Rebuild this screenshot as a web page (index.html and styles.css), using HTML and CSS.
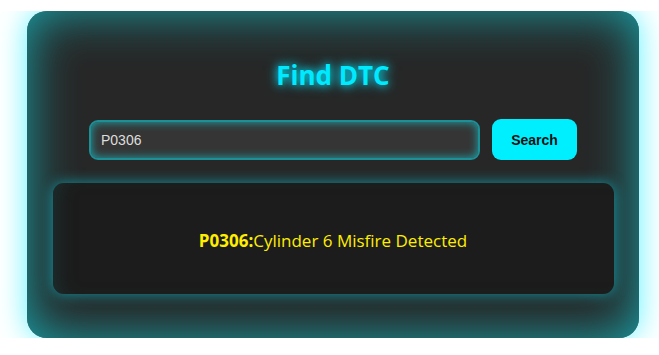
FILE: index.html
```html
<!DOCTYPE html>
<html>
<head>
<meta charset="utf-8">
<link rel="stylesheet" href="styles.css">
</head>
<body>
<div class="stage">
  <div class="card">
    <h1 class="title">Find DTC</h1>
    <div class="search-row">
      <input class="code-input" type="text" value="P0306">
      <button class="search-btn">Search</button>
    </div>
    <div class="result">
      <p class="result-text"><strong>P0306:</strong>Cylinder 6 Misfire Detected</p>
    </div>
  </div>
</div>
</body>
</html>
```
FILE: styles.css
```css
html, body {
  margin: 0;
  padding: 0;
  background: #ffffff;
}
.stage {
  margin-top: 11px;
  height: 327px;
  overflow: hidden;
  padding: 0 20px 0 27px;
}
.card {
  width: 612px;
  height: 327px;
  box-sizing: border-box;
  border-radius: 20px;
  background: #272727;
  box-shadow: inset 0 0 50px #18a6ad, 0 0 30px #5ef2ff;
  padding: 49px 26px 44px;
  display: flex;
  flex-direction: column;
  align-items: center;
}
.title {
  margin: 0;
  font-family: "Open Sans", "Noto Sans", sans-serif;
  font-weight: 700;
  font-size: 26px;
  line-height: 30px;
  color: #00eaff;
  text-shadow: 0 0 8px #00e5ff, 0 0 14px rgba(0, 229, 255, 0.6);
}
.search-row {
  margin-top: 29px;
  display: flex;
  gap: 12px;
  align-items: center;
}
.code-input {
  width: 391px;
  height: 40px;
  box-sizing: border-box;
  border: 2px solid #1d8f96;
  border-radius: 9px;
  background: #353535;
  box-shadow: inset 0 0 10px #1ca7ae;
  color: #dddddd;
  font-family: "Liberation Sans", Arial, sans-serif;
  font-size: 14px;
  padding: 0 10px;
  outline: none;
}
.search-btn {
  width: 85px;
  height: 41px;
  border: none;
  border-radius: 9px;
  background: #00efff;
  color: #111111;
  font-family: "Liberation Sans", Arial, sans-serif;
  font-weight: 700;
  font-size: 14px;
  padding: 0;
}
.result {
  margin-top: 23px;
  width: 561px;
  height: 112px;
  box-sizing: border-box;
  border-radius: 11px;
  background: #1c1c1c;
  box-shadow: 0 0 14px rgba(0, 235, 255, 0.55), inset 14px 0 18px -10px rgba(30, 60, 60, 0.6);
  display: flex;
  align-items: center;
  justify-content: center;
}
.result-text {
  margin: 4px 0 0;
  font-family: "Open Sans", "Noto Sans", sans-serif;
  font-size: 17px;
  color: #ffee00;
}
.result-text strong {
  font-weight: 700;
}
```
